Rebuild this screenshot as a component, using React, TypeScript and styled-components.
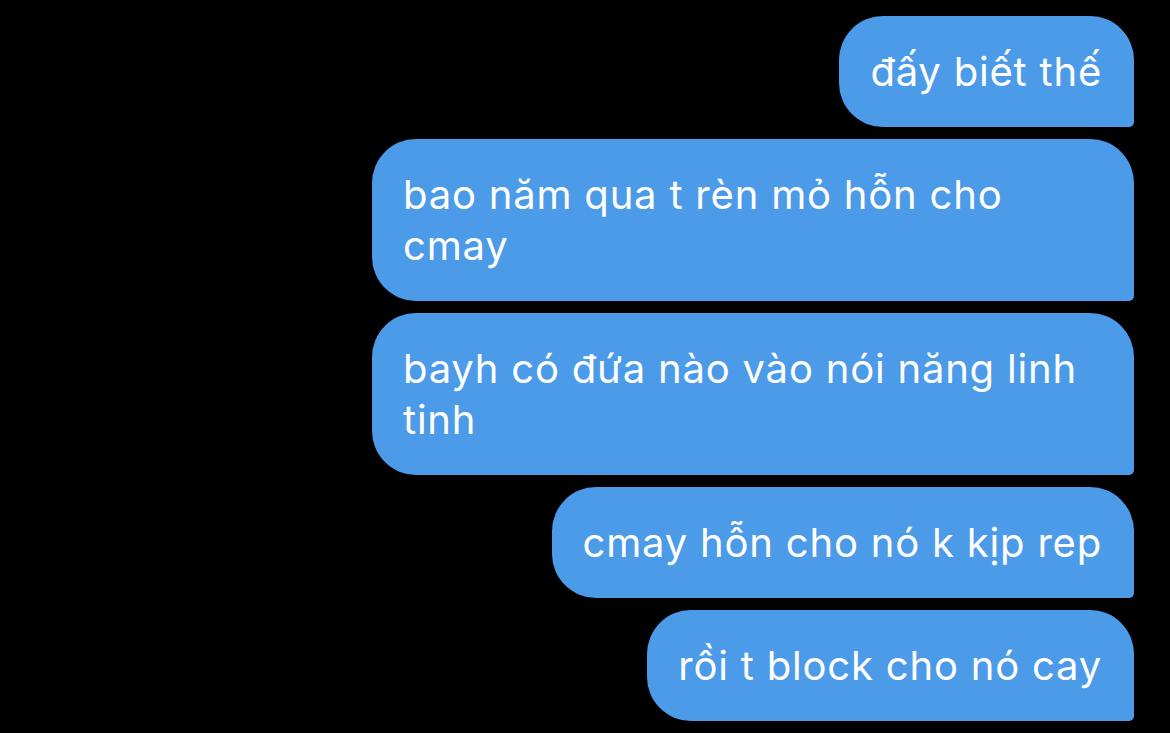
import React from "react";
import styled, { createGlobalStyle } from "styled-components";

const Global = createGlobalStyle`
  html, body { margin: 0; padding: 0; background: #000; }
  body { font-family: Inter, "Noto Sans", sans-serif; }
`;

const Thread = styled.div`
  width: 1170px;
  height: 733px;
  background: #000;
  box-sizing: border-box;
  padding: 16px 36px 0 0;
  display: flex;
  flex-direction: column;
  align-items: flex-end;
  gap: 12px;
  overflow: hidden;
`;

const Bubble = styled.div`
  box-sizing: border-box;
  max-width: 762px;
  background: #4c9be8;
  color: #fff;
  font-size: 40px;
  line-height: 51px;
  font-weight: 400;
  letter-spacing: 0.8px;
  padding: 30px 32px 30px 31px;
  border-radius: 44px 44px 5px 44px;
`;

const messages = [
  "đấy biết thế",
  "bao năm qua t rèn mỏ hỗn cho cmay",
  "bayh có đứa nào vào nói năng linh tinh",
  "cmay hỗn cho nó k kịp rep",
  "rồi t block cho nó cay",
];

export default function App() {
  return (
    <>
      <Global />
      <Thread>
        {messages.map((m, i) => (
          <Bubble key={i}>{m}</Bubble>
        ))}
      </Thread>
    </>
  );
}
